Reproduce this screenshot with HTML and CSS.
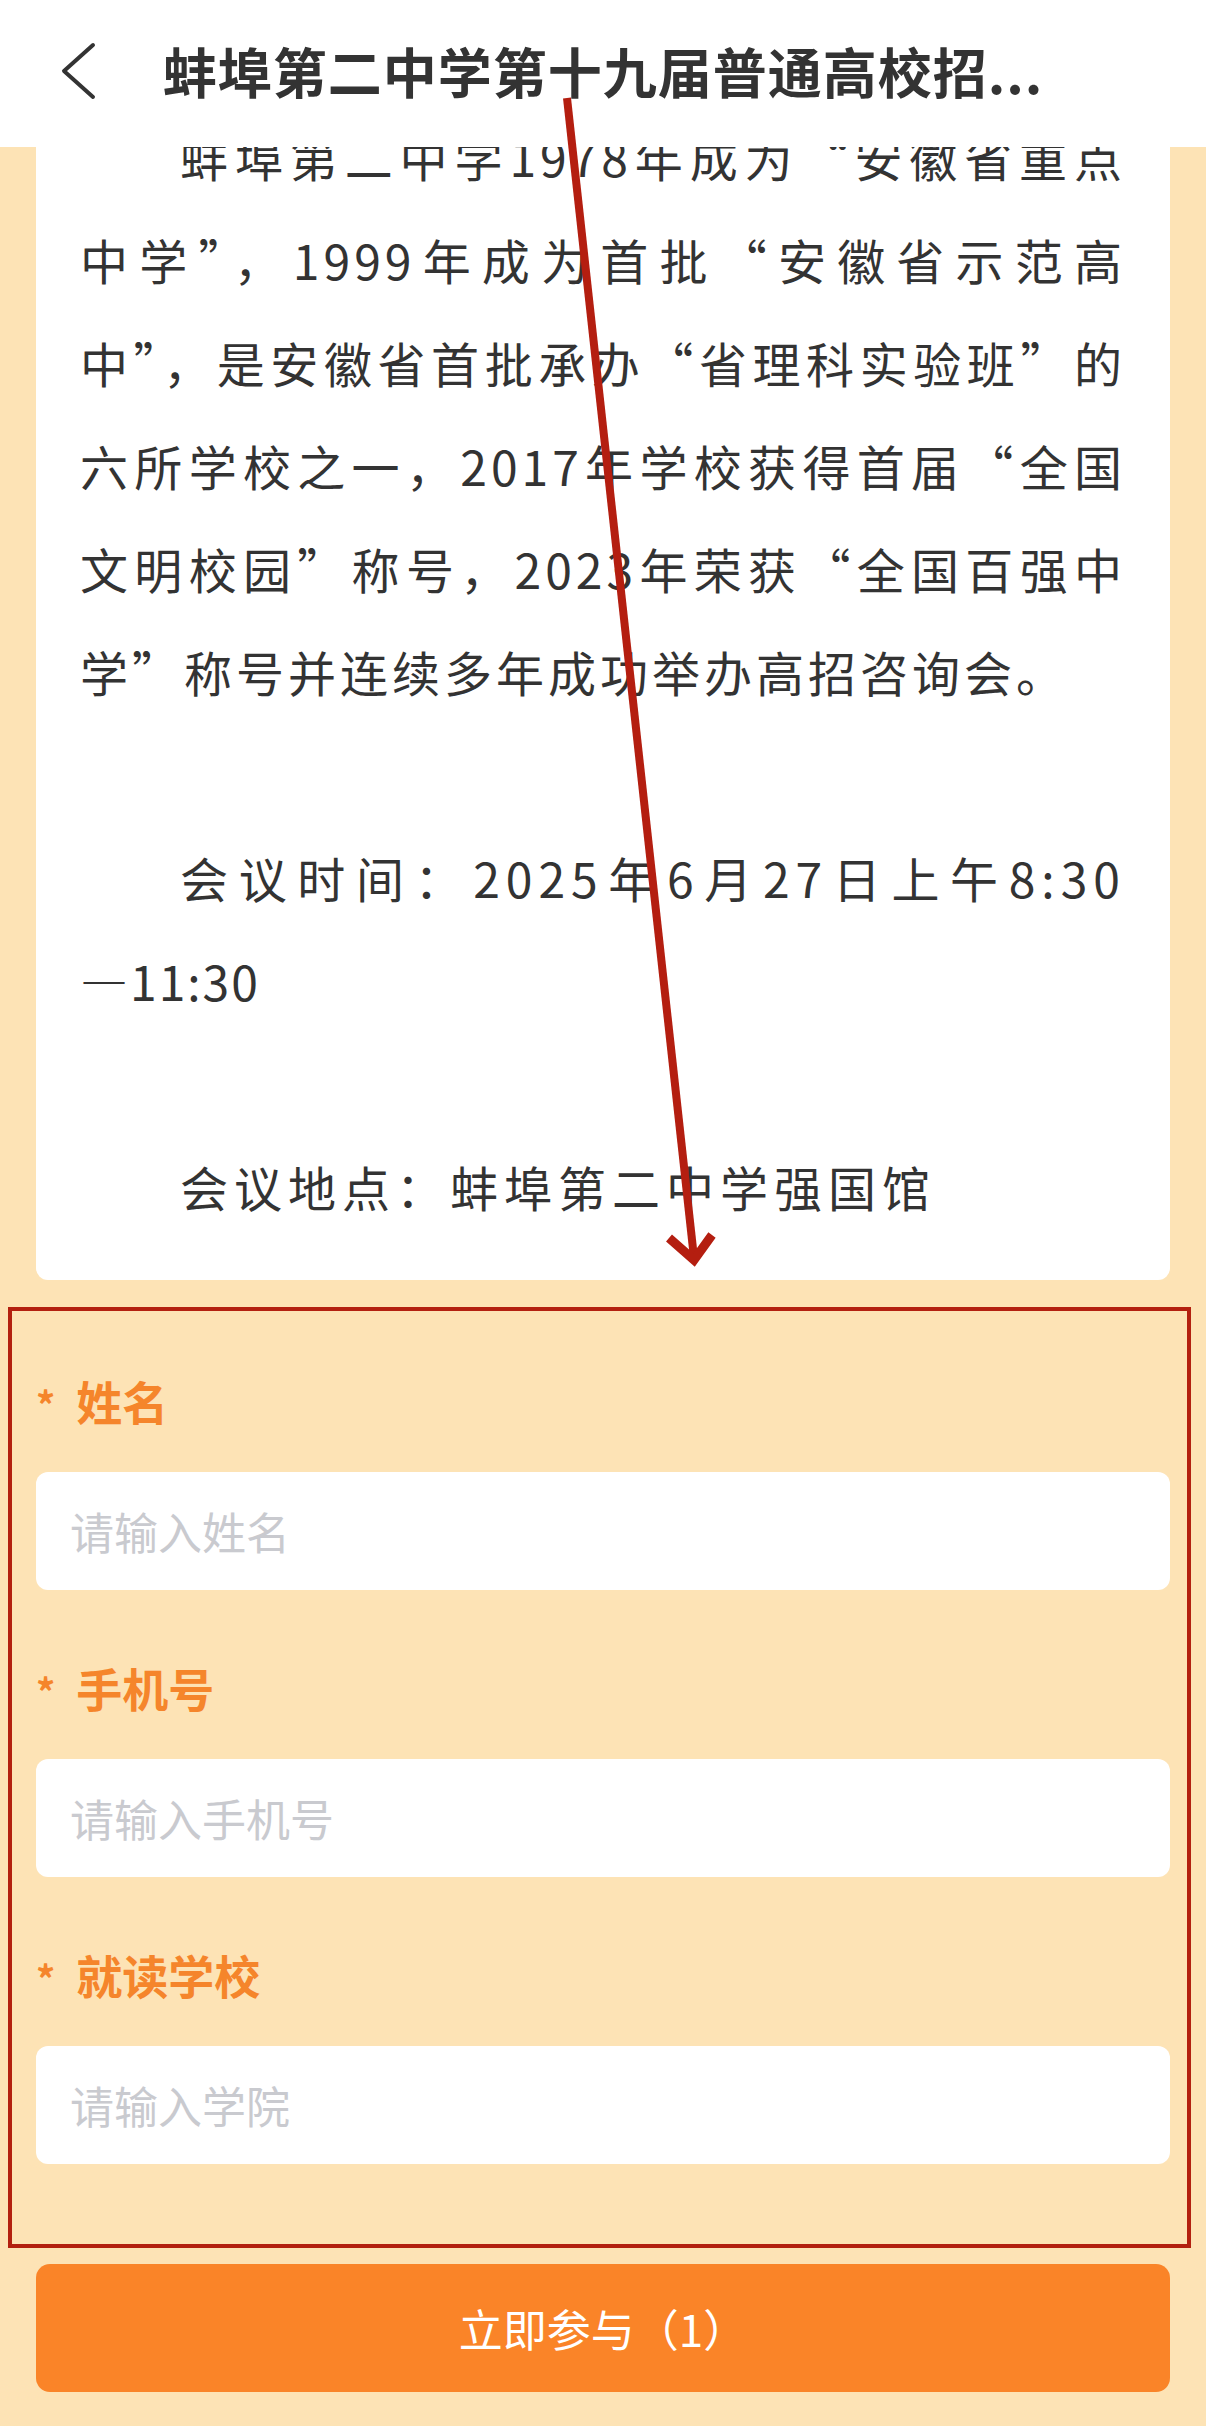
FILE: index.html
```html
<!DOCTYPE html>
<html lang="zh-CN">
<head>
    <meta charset="utf-8" />
    <meta name="viewport" content="width=device-width, initial-scale=1" />
    <title>蚌埠第二中学第十九届普通高校招生咨询会</title>
    <link rel="stylesheet" href="styles.css">
</head>
<body>

  <!-- Barra superior -->
  <header class="nav">
    <a class="nav-back" href="#">
      <svg width="40" height="60" viewBox="0 0 40 60">
        <polyline points="33,4 4,30 33,56" fill="none" stroke="#333" stroke-width="4" stroke-linecap="round" stroke-linejoin="round" />
      </svg>
    </a>
    <h1 class="nav-title">蚌埠第二中学第十九届普通高校招...</h1>
  </header>

  <main class="page">
    <section class="intro">
      <p class="intro-text">蚌埠第二中学1978年成为“安徽省重点中学”，1999年成为首批“安徽省示范高中”，是安徽省首批承办“省理科实验班”的六所学校之一，2017年学校获得首届“全国文明校园”称号，2023年荣获“全国百强中学”称号并连续多年成功举办高招咨询会。</p>
      <p class="intro-blank"><br></p>
      <p class="intro-meta">会议时间：2025年6月27日上午8:30<span class="nowrap">—11:30</span></p>
      <p class="intro-blank"><br></p>
      <p class="intro-meta">会议地点：蚌埠第二中学强国馆</p>
    </section>

    <form class="signup">
      <div class="field">
        <label class="field-label"><span class="req">*</span>姓名</label>
        <input class="field-input" type="text" placeholder="请输入姓名" />
      </div>
      <div class="field">
        <label class="field-label"><span class="req">*</span>手机号</label>
        <input class="field-input" type="tel" placeholder="请输入手机号" />
      </div>
      <div class="field">
        <label class="field-label"><span class="req">*</span>就读学校</label>
        <input class="field-input" type="text" placeholder="请输入学院" />
      </div>
    </form>

    <button class="submit" type="button">立即参与（1）</button>
  </main>

  <!-- Marcas de la captura -->
  <div class="mark-box"></div>
  <svg class="mark-arrow" width="1206" height="2426" viewBox="0 0 1206 2426">
    <line x1="567" y1="98" x2="694" y2="1258" stroke="#b41e10" stroke-width="8" />
    <polyline points="669,1238 694,1260 712,1235" fill="none" stroke="#b41e10" stroke-width="9" />
  </svg>

</body>
</html>
```

FILE: styles.css
```css
/* --- base --- */
html, body { margin: 0; padding: 0; }
body {
    font-family: "Noto Sans CJK SC", sans-serif;
    background-color: #fde3b5;
    color: #333;
    position: relative;
    overflow: hidden;
}

/* barra superior fija */
.nav {
    position: fixed;
    top: 0; left: 0; right: 0;
    height: 147px;
    background-color: #fff;
    z-index: 5;
    display: flex;
    align-items: flex-start;
    padding-top: 36px;
    box-sizing: border-box;
}
.nav-back {
    width: 150px;
    height: 70px;
    display: flex;
    align-items: center;
    padding-left: 60px;
    box-sizing: border-box;
    flex-shrink: 0;
}
.nav-title {
    flex: 1;
    margin: 0 150px 0 0;
    min-width: 0;
    font-size: 54px;
    font-weight: 700;
    letter-spacing: 1px;
    line-height: 70px;
    text-align: center;
    color: #333;
    white-space: nowrap;
}

/* contenido */
.page { padding: 65px 36px 30px; }

.intro {
    background-color: #fff;
    border-radius: 12px;
    padding: 40px 44px 42px;
}
.intro p { margin: 0; font-size: 48px; line-height: 103px; }
.intro-text { letter-spacing: 4px; text-align: justify; text-indent: 100px; }
.intro-meta { letter-spacing: 6px; text-align: justify; text-indent: 100px; }
.nowrap { white-space: nowrap; letter-spacing: 2px; }

/* formulario */
.signup { padding-top: 94px; }
.field { margin-bottom: 71px; }
.field:last-child { margin-bottom: 0; }
.field-label {
    display: block;
    height: 60px;
    line-height: 52px;
    font-size: 46px;
    font-weight: 700;
    color: #f5852b;
    margin-bottom: 38px;
}
.req { font-size: 38px; margin-right: 21px; }
.field-input {
    display: block;
    width: 100%;
    height: 118px;
    border: none;
    border-radius: 12px;
    background-color: #fff;
    padding: 0 34px;
    box-sizing: border-box;
    font-family: inherit;
    font-size: 44px;
    color: #333;
    outline: none;
}
.field-input::placeholder { color: #c9cacf; }

.submit {
    display: block;
    width: 100%;
    height: 128px;
    margin-top: 100px;
    border: none;
    border-radius: 14px;
    background-color: #fa8428;
    color: #fff;
    font-family: inherit;
    font-size: 44px;
    cursor: pointer;
}

/* marcas rojas sobre la captura */
.mark-box {
    position: absolute;
    top: 1307px; left: 8px;
    width: 1183px; height: 941px;
    border: 4px solid #b3200f;
    box-sizing: border-box;
    pointer-events: none;
    z-index: 6;
}
.mark-arrow {
    position: absolute;
    top: 0; left: 0;
    pointer-events: none;
    z-index: 6;
}
```
